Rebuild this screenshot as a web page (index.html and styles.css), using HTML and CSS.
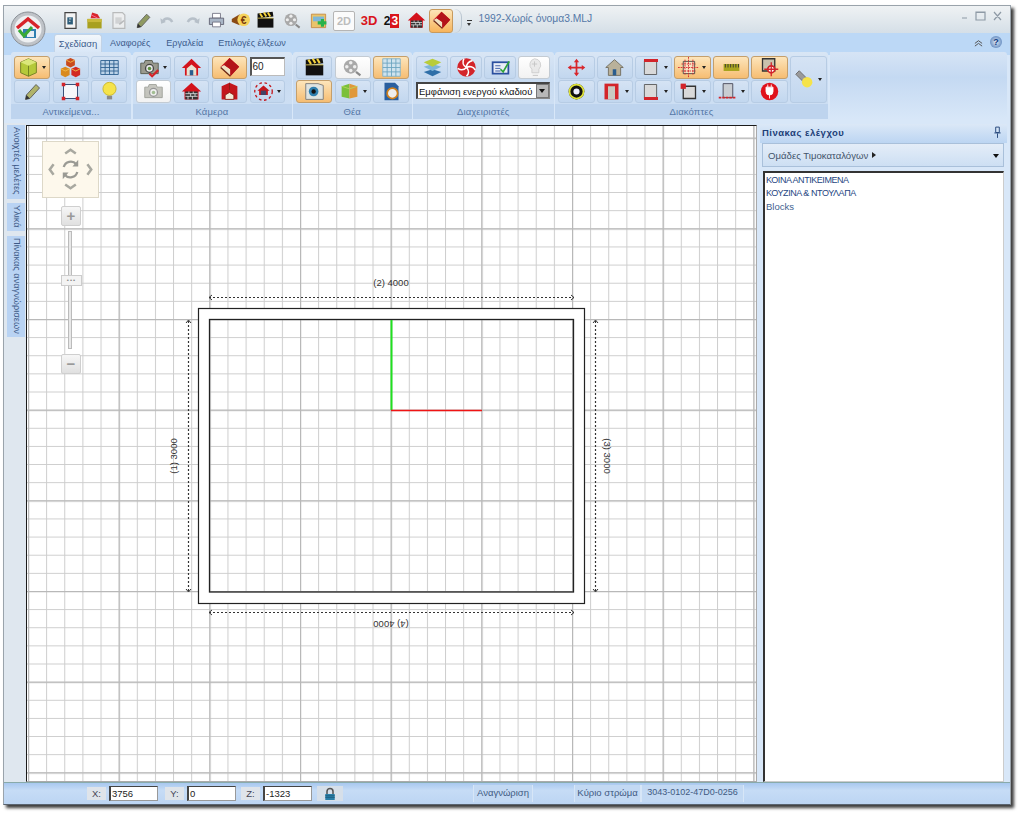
FILE: index.html
```html
<!DOCTYPE html>
<html lang="el">
<head>
<meta charset="utf-8">
<title>1992-Χωρίς όνομα3.MLJ</title>
<link rel="stylesheet" href="styles.css">
</head>
<body>
<svg class="defs" width="0" height="0">
  <defs>
    <symbol id="clap" viewBox="0 0 24 24"><path d="M2 9h20v12H2z" fill="#111"/><path d="M2 3l19-2 1 6-20 2z" fill="#111"/><path d="M5 3l3 5M10 2l3 5M15 2l3 5" stroke="#f3d23c" stroke-width="2.4"/><path d="M2 9h20" stroke="#d8c040"/></symbol>
    <symbol id="reel" viewBox="0 0 24 24"><circle cx="10" cy="11" r="8" fill="#a9a9a9"/><circle cx="10" cy="6.5" r="2" fill="#eee"/><circle cx="5.5" cy="11" r="2" fill="#eee"/><circle cx="14.5" cy="11" r="2" fill="#eee"/><circle cx="10" cy="15.5" r="2" fill="#eee"/><path d="M16 17l5 4" stroke="#8a8a8a" stroke-width="2.5"/></symbol>
    <symbol id="brick" viewBox="0 0 24 24"><path d="M12 2L1 12h3v9h16v-9h3z" fill="#d3121c"/><path d="M5 12h14v9H5z" fill="#333"/><path d="M5 14.500h14M5 17.500h14M9 12v2.500M14 12v2.500M11 14.500v3M16 14.500v3M8 17.500v3.500M13 17.500v3.500" stroke="#eee" stroke-width=".9"/></symbol>
    <symbol id="iso" viewBox="0 0 24 24"><path d="M12 1l11 10-10 11L1 12z" fill="#c8181e"/><path d="M1 12l12 10v-8L6 9z" fill="#efe2c4"/><path d="M13 14l-7-5 6-8 11 10-10 11z" fill="#b31319"/><path d="M2 12l11 10" stroke="#6b2a14" stroke-width="1.500"/></symbol>
    <symbol id="house" viewBox="0 0 24 24"><path d="M12 2L1 12.500h3.500V21h15v-8.500H23z" fill="#d3141c"/><path d="M6.500 13l5.500-4.500 5.500 4.500v8h-11z" fill="#e8e2d0"/><path d="M10 15h4v6h-4z" fill="#2a5d8f"/></symbol>
    <symbol id="cam" viewBox="0 0 24 24"><path d="M2 7h4l1-3h8l1 3h6v12H2z" fill="#9a9a8e" stroke="#55584c"/><circle cx="12" cy="13" r="4.500" fill="#e8e8e8" stroke="#444" stroke-width="1.500"/><circle cx="12" cy="13" r="2" fill="#5d8f3f"/></symbol>
    <symbol id="sq" viewBox="0 0 24 24"><path d="M5 4h14v16H5z" fill="#d9d9d9" stroke="#555"/></symbol>
  </defs>
</svg>
<div class="window">
  <header class="titlebar">
    <div class="logo">
      <svg viewBox="0 0 36 36" class="logo-svg"><circle cx="18" cy="18" r="17" fill="#bfc3c8" stroke="#8b9096"/><circle cx="18" cy="18" r="13.500" fill="#eef0f2"/><path d="M13 18h13v9H13z" fill="#2f7fb0"/><path d="M17 20h7v6h-7z" fill="#e6eef4"/><path d="M7 17L18 8l11 9" fill="none" stroke="#d8232a" stroke-width="3.500"/><path d="M9 19l5 6 8-9" fill="none" stroke="#39a935" stroke-width="3"/></svg>
    </div>
    <div class="qat">
      <span class="q"><svg class="i" viewBox="0 0 24 24"><path d="M5 2h14v20H5z" fill="#f4f4f4" stroke="#444" stroke-width="1.500"/><path d="M8 8h7v9H8z" fill="#2c5d7a"/><path d="M10 10h3M10 13h2" stroke="#fff"/></svg></span>
      <span class="q"><svg class="i" viewBox="0 0 24 24"><path d="M3 10h18v12H3z" fill="#a8a020"/><path d="M3 10h18v4H3z" fill="#c9b93a"/><path d="M7 9l2-7 7 2 3 5z" fill="#d8262c"/><path d="M8 5l8 4" stroke="#f7a" /></svg></span>
      <span class="q dim"><svg class="i" viewBox="0 0 24 24"><path d="M5 2h12l3 3v17H5z" fill="#f0f0f0" stroke="#aaa" stroke-width="1.500"/><path d="M8 8h8v8H8z" fill="#ccc"/><path d="M13 17l6-5" stroke="#aaa" stroke-width="2"/></svg></span>
      <span class="q"><svg class="i" viewBox="0 0 24 24"><path d="M5 16L16 4l4 4L9 20l-5 1z" fill="#8f9a62" stroke="#555"/><path d="M4 21l1-5 4 4z" fill="#333"/></svg></span>
      <span class="q dim"><svg class="i" viewBox="0 0 24 24"><path d="M6 14c2-6 9-6 12 0" fill="none" stroke="#a9b3bd" stroke-width="3"/><path d="M3 9l1 7 6-2z" fill="#a9b3bd"/></svg></span>
      <span class="q dim"><svg class="i" viewBox="0 0 24 24"><path d="M18 14c-2-6-9-6-12 0" fill="none" stroke="#a9b3bd" stroke-width="3"/><path d="M21 9l-1 7-6-2z" fill="#a9b3bd"/></svg></span>
      <span class="q"><svg class="i" viewBox="0 0 24 24"><path d="M7 3h10v6H7z" fill="#fff" stroke="#667"/><path d="M3 9h18v8H3z" fill="#a9b6c6" stroke="#556"/><path d="M7 14h10v6H7z" fill="#fff" stroke="#667"/></svg></span>
      <span class="q"><svg class="i" viewBox="0 0 24 24"><path d="M1 10l10-6v14L1 14z" fill="#8a4a14"/><circle cx="16" cy="11" r="8" fill="#f5d25a"/><text x="16" y="16" class="eu">€</text></svg></span>
      <span class="q"><svg class="i"><use href="#clap"/></svg></span>
      <span class="q wide"><svg class="i"><use href="#reel"/></svg></span>
      <span class="q"><svg class="i" viewBox="0 0 24 24"><path d="M3 4h18v17H3z" fill="#e9c46a" stroke="#c0813a"/><path d="M5 7h14v6H5z" fill="#7db7d8"/><path d="M11 13h4v-3h4v3h3v4h-3v3h-4v-3h-4z" fill="#27b34a"/></svg></span>
      <span class="q2d">2D</span>
      <span class="q t3d">3D</span>
      <span class="q t23"><b class="t2">2</b><b class="t3">3</b></span>
      <span class="q"><svg class="i"><use href="#brick"/></svg></span>
      <span class="q qon"><svg class="i"><use href="#iso"/></svg></span>
    </div>
    <span class="qat-end"></span>
    <span class="qat-drop"></span>
    <span class="doc-title">1992-Χωρίς όνομα3.MLJ</span>
    <div class="winctl">
      <svg viewBox="0 0 44 12" class="winctl-svg"><path d="M2 8h5M16 2h9v8h-9zM16 2.500h9M34 2l7 8M41 2l-7 8" fill="none" stroke="#8e9aa6" stroke-width="1.200"/></svg>
    </div>
  </header>

  <nav class="tabs">
    <span class="tab active">Σχεδίαση</span>
    <span class="tab t2nd">Αναφορές</span>
    <span class="tab t3rd">Εργαλεία</span>
    <span class="tab t4th">Επιλογές έλξεων</span>
    <span class="tabs-right">
      <svg class="chev" viewBox="0 0 10 10"><path d="M1 6l4-3 4 3M1 9l4-3 4 3" fill="none" stroke="#555" stroke-width="1.100"/></svg>
      <span class="help">?</span>
    </span>
  </nav>

  <section class="ribbon">
    <div class="group g1">
      <div class="grid cols3">
        <span class="b on drop"><svg class="i" viewBox="0 0 24 24"><path d="M12 2l9 4v12l-9 4-9-4V6z" fill="#b5c93a" stroke="#6b7a20"/><path d="M3 6l9 4 9-4-9-4z" fill="#dbe77a"/><path d="M12 10v12" stroke="#6b7a20"/></svg><i class="caret"></i></span>
        <span class="b"><svg class="i" viewBox="0 0 24 24"><path d="M12 1l5 2.500v6L12 12l-5-2.500v-6z" fill="#c94b1d"/><path d="M6 11l5 2.500v7L6 23l-5-2.500v-7z" fill="#d98a1e"/><path d="M18 11l5 2.500v7L18 23l-5-2.500v-7z" fill="#d22a22"/><path d="M7 3.500l5 2.500 5-2.500M1 13.500l5 2.500 5-2.500M13 13.500l5 2.500 5-2.500" fill="none" stroke="#f5c04a"/></svg></span>
        <span class="b"><svg class="i" viewBox="0 0 24 24"><path d="M2 4h20v16H2z" fill="#bcd3e8" stroke="#2c5f8f"/><path d="M2 8h20M2 12h20M2 16h20M7 4v16M12 4v16M17 4v16" stroke="#2c5f8f"/></svg></span>
        <span class="b"><svg class="i" viewBox="0 0 24 24"><path d="M5 16L16 4l4 4L9 20l-5 1z" fill="#b0b36a" stroke="#555"/><path d="M4 21l1-5 4 4z" fill="#333"/></svg></span>
        <span class="b"><svg class="i" viewBox="0 0 24 24"><path d="M4 4h16v16H4z" fill="#f7f7fa" stroke="#223a66"/><path d="M2 2h4v4H2zM18 2h4v4h-4zM2 18h4v4H2zM18 18h4v4h-4z" fill="#d3242a"/></svg></span>
        <span class="b"><svg class="i" viewBox="0 0 24 24"><circle cx="12" cy="9" r="7.500" fill="#f5e34a" stroke="#c9b428"/><path d="M9 17h6v4H9z" fill="#8a8a8a"/></svg></span>
      </div>
      <div class="glabel">Αντικείμενα...</div>
    </div>

    <div class="group g2">
      <div class="grid cols4">
        <span class="b drop"><svg class="i" viewBox="0 0 24 24"><use href="#cam"/><path d="M12 19l3 3 7-7" fill="none" stroke="#d3242a" stroke-width="2.500"/></svg><i class="caret"></i></span>
        <span class="b"><svg class="i"><use href="#house"/></svg></span>
        <span class="b on"><svg class="i"><use href="#iso"/></svg></span>
        <span class="num">60</span>
        <span class="b w"><svg class="i op"><use href="#cam"/></svg></span>
        <span class="b"><svg class="i"><use href="#brick"/></svg></span>
        <span class="b"><svg class="i" viewBox="0 0 24 24"><path d="M3 6l9-4 9 4v15H3z" fill="#c3161c"/><path d="M12 2v8M7 21v-5l5-3 5 3v5z" fill="#f3ecd8" stroke="#8a1a14"/></svg></span>
        <span class="b drop"><svg class="i" viewBox="0 0 24 24"><path d="M12 5l-7 6h2v5h10v-5h2z" fill="#c3161c"/><path d="M9 11h6v5H9z" fill="#446"/><circle cx="12" cy="12" r="10" fill="none" stroke="#c3161c" stroke-dasharray="3 3" stroke-width="1.500"/></svg><i class="caret"></i></span>
      </div>
      <div class="glabel">Κάμερα</div>
    </div>

    <div class="group g3">
      <div class="grid cols3">
        <span class="b"><svg class="i"><use href="#clap"/></svg></span>
        <span class="b w"><svg class="i"><use href="#reel"/></svg></span>
        <span class="b on"><svg class="i" viewBox="0 0 24 24"><path d="M2 2h20v20H2z" fill="#cfe3ee" stroke="#7fb0c8"/><path d="M2 7h20M2 12h20M2 17h20M7 2v20M12 2v20M17 2v20" stroke="#6aa3bf"/></svg></span>
        <span class="b on"><svg class="i" viewBox="0 0 24 24"><path d="M2 3h14l6 2v16H2z" fill="#dfe3e0" stroke="#777"/><circle cx="11" cy="12" r="5.500" fill="#2f7fae"/><circle cx="11" cy="12" r="2.500" fill="#111"/></svg></span>
        <span class="b drop"><svg class="i" viewBox="0 0 24 24"><path d="M3 6l9-3v17l-9-2z" fill="#7ac03a"/><path d="M12 3l9 3v12l-9 2z" fill="#e0983a"/><path d="M3 6l9 3 9-3" fill="none" stroke="#b5d45a"/></svg><i class="caret"></i></span>
        <span class="b"><svg class="i" viewBox="0 0 24 24"><path d="M4 2h12l4 4v16H4z" fill="#2a5f9f"/><circle cx="13" cy="14" r="6" fill="#eee" stroke="#d0801c" stroke-width="2"/></svg></span>
      </div>
      <div class="glabel">Θέα</div>
    </div>

    <div class="group g4">
      <div class="grid cols4n">
        <span class="b"><svg class="i" viewBox="0 0 24 24"><path d="M12 14l10 3-10 5-10-5z" fill="#2f6fa8"/><path d="M12 8l10 3-10 5-10-5z" fill="#7fb5d8"/><path d="M12 2l10 4-10 5-10-5z" fill="#b9cc3a"/></svg></span>
        <span class="b"><svg class="i" viewBox="0 0 24 24"><circle cx="12" cy="12" r="10.500" fill="#d3242a"/><g fill="none" stroke="#fff" stroke-width="1.800"><path d="M12 12C12 8 15 5 19 4"/><path d="M12 12C15 10 20 11 22 15"/><path d="M12 12C15 15 15 19 12 22"/><path d="M12 12C9 15 5 15 2 13"/><path d="M12 12C8 10 7 6 9 2"/></g></svg></span>
        <span class="b"><svg class="i" viewBox="0 0 24 24"><path d="M2 5h20v15H2z" fill="#2a4f9f"/><path d="M4 7h16v11H4z" fill="#e9edf7"/><path d="M6 10h6M6 13h6M6 16h6" stroke="#2a4f9f"/><path d="M12 14l3 3 7-12" fill="none" stroke="#2fa33a" stroke-width="2"/></svg></span>
        <span class="b w"><svg class="i op" viewBox="0 0 24 24"><path d="M12 2a7 7 0 0 1 5 12v4H9v-4A7 7 0 0 1 12 2z" fill="#ddd" stroke="#aaa"/><path d="M10 21h6M12 5v6M9 8h6" stroke="#999"/></svg></span>
      </div>
      <div class="sel"><span class="sel-text">Εμφάνιση ενεργού κλαδιού</span><i class="sel-btn"></i></div>
      <div class="glabel">Διαχειριστές</div>
    </div>

    <div class="group g5">
      <div class="grid cols7">
        <span class="b"><svg class="i" viewBox="0 0 24 24"><path d="M12 2l3 4h-2v5h5V9l4 3-4 3v-2h-5v5h2l-3 4-3-4h2v-5H6v2l-4-3 4-3v2h5V6H9z" fill="#d8262c"/></svg></span>
        <span class="b"><svg class="i" viewBox="0 0 24 24"><path d="M12 3L2 12h3v9h14v-9h3z" fill="#b9b19a" stroke="#6f6a5c"/><path d="M10 14h4v7h-4z" fill="#2a5d8f"/></svg></span>
        <span class="b drop"><svg class="i"><use href="#sq"/></svg><i class="tbar"></i><i class="caret"></i></span>
        <span class="b on drop"><svg class="i" viewBox="0 0 24 24"><path d="M6 5h13v14H6z" fill="#f7e5c4" stroke="#444"/><path d="M12 0v24M0 12h24M4 8h16M4 16h16M8 3v18M17 3v18" stroke="#d3242a" stroke-dasharray="2 1"/></svg><i class="caret"></i></span>
        <span class="b on"><svg class="i" viewBox="0 0 24 24"><path d="M3 8h18v8H3z" fill="#a8a41e"/><path d="M5 8v4M8 8v4M11 8v4M14 8v4M17 8v4M20 8v4" stroke="#333"/></svg></span>
        <span class="b on"><svg class="i" viewBox="0 0 24 24"><path d="M4 2h14v14H4z" fill="#c9c2ad" stroke="#333" stroke-width="1.500"/><circle cx="14" cy="14" r="4" fill="#fff" stroke="#d3242a" stroke-width="2"/><path d="M14 6v16M6 14h16" stroke="#d3242a" stroke-width="1.500"/></svg></span>
        <span class="b tall drop"><svg class="i" viewBox="0 0 24 24"><path d="M2 6l4-4 9 9-4 4z" fill="#9a9a9a" stroke="#666"/><circle cx="15" cy="15" r="6" fill="#f5e34a"/></svg><i class="caret"></i></span>
        <span class="b"><svg class="i" viewBox="0 0 24 24"><circle cx="12" cy="12" r="9" fill="#111"/><circle cx="12" cy="12" r="8" fill="none" stroke="#dfe23a" stroke-width="2"/><circle cx="12" cy="12" r="3.500" fill="#eef"/></svg></span>
        <span class="b drop"><svg class="i" viewBox="0 0 24 24"><path d="M4 3h16v18H4z" fill="#d3242a"/><path d="M8 6h8v15H8z" fill="#c9c9c2"/></svg><i class="caret"></i></span>
        <span class="b drop"><svg class="i"><use href="#sq"/></svg><i class="bbar"></i><i class="caret"></i></span>
        <span class="b drop"><svg class="i" viewBox="0 0 24 24"><path d="M6 6h14v14H6z" fill="#d9d9d9" stroke="#333" stroke-width="1.500"/><path d="M3 3h6v6H3z" fill="#d3242a"/></svg><i class="caret"></i></span>
        <span class="b drop"><svg class="i" viewBox="0 0 24 24"><path d="M7 3h11v16H7z" fill="#c9cdd2" stroke="#445"/><path d="M2 19h20" stroke="#d3242a" stroke-width="2" stroke-dasharray="3 1"/></svg><i class="caret"></i></span>
        <span class="b"><svg class="i" viewBox="0 0 24 24"><circle cx="12" cy="12" r="10" fill="#e0121c"/><path d="M8 7h8v5a4 4 0 0 1-8 0zM12 16v4M10 4v3M14 4v3" fill="#fff" stroke="#fff"/></svg></span>
      </div>
      <div class="glabel">Διακόπτες</div>
    </div>
    <div class="ribbon-rest"></div>
  </section>

  <main class="main">
    <aside class="sidetabs">
      <span class="stab s1">Ανοιχτές μελέτες</span>
      <span class="stab s2">Υλικά</span>
      <span class="stab s3">Πίνακας αναγνώρισεων</span>
    </aside>

    <div class="canvas">
      <svg class="plan" viewBox="27 126 729 655" width="729" height="655">
        <defs>
          <pattern id="minor" x="28" y="47" width="18.133" height="18.133" patternUnits="userSpaceOnUse">
            <path d="M.5 0v18.133M0 .5h18.133" stroke="#cdcdcd" fill="none"/>
          </pattern>
          <pattern id="major" x="28" y="47" width="90.667" height="90.667" patternUnits="userSpaceOnUse">
            <path d="M.5 0v90.667M0 .5h90.667" stroke="#b8b8b8" stroke-width="1.400" fill="none"/>
          </pattern>
        </defs>
        <rect x="27" y="126" width="729" height="655" fill="#fff"/>
        <rect x="27" y="126" width="729" height="655" fill="url(#minor)"/>
        <rect x="27" y="126" width="729" height="655" fill="url(#major)"/>
        <rect x="198.500" y="308.500" width="386" height="295" fill="#fff" stroke="#222" stroke-width="1.200"/>
        <rect x="209.500" y="319.500" width="364" height="272.500" fill="#fff"/>
        <rect x="209.500" y="319.500" width="364" height="272.500" fill="url(#minor)"/>
        <rect x="209.500" y="319.500" width="364" height="272.500" fill="url(#major)"/>
        <rect x="209.500" y="319.500" width="364" height="272.500" fill="none" stroke="#222" stroke-width="1.300"/>
        <path d="M391.500 320v90" stroke="#1fe01f" stroke-width="2"/>
        <path d="M391 410.500h91" stroke="#f01414" stroke-width="1.400"/>
        <g class="dim-line">
          <path d="M209 297.500h365M188.500 321v271M595.500 321v271M209 612.500h365"/>
          <path class="solid" d="M212 295l-3 2.500 3 2.500M571 295l3 2.500-3 2.500M186 323l2.500-3 2.500 3M186 589l2.500 3 2.500-3M593 323l2.500-3 2.500 3M593 589l2.500 3 2.500-3M212 610l-3 2.500 3 2.500M571 610l3 2.500-3 2.500"/>
        </g>
        <text x="391" y="286" class="dim-text">(2) 4000</text>
        <text class="dim-text" transform="translate(177 456) rotate(-90)">(1) 3000</text>
        <text class="dim-text" transform="translate(604 456) rotate(90)">(3) 3000</text>
        <text class="dim-text" transform="translate(391 621) rotate(180)">(4) 4000</text>
      </svg>

      <div class="pan">
        <svg viewBox="0 0 57 57" class="pan-svg">
          <path d="M23 12l5.500-4 5.500 4M23 44l5.500 4 5.500-4M11 23l-4 5.500 4 5.500M46 23l4 5.500-4 5.500" fill="none" stroke="#a8a8a0" stroke-width="2.600"/>
          <path d="M21.500 26a7.500 7.500 0 0 1 13-3M35.500 31a7.500 7.500 0 0 1-13 3" fill="none" stroke="#9a9a94" stroke-width="2.400"/>
          <path d="M36.500 18.500v7h-6zM20.500 38.500v-7h6z" fill="#9a9a94"/>
        </svg>
      </div>
      <span class="zbtn zplus">+</span>
      <span class="ztrack"></span>
      <span class="zthumb">•••</span>
      <span class="zbtn zminus">−</span>
    </div>

    <aside class="panel">
      <div class="panel-head">
        <span class="panel-title">Πίνακας ελέγχου</span>
        <svg class="pin" viewBox="0 0 10 14"><path d="M3 1h4v6H3zM1.500 7.500h7M5 8v5" fill="none" stroke="#2c4d80" stroke-width="1.100"/></svg>
      </div>
      <div class="panel-drop">
        <span>Ομάδες Τιμοκαταλόγων</span><i class="tri-r"></i><i class="tri-d"></i>
      </div>
      <ul class="tree">
        <li class="cap">ΚΟΙΝΑ ΑΝΤΙΚΕΙΜΕΝΑ</li>
        <li class="cap">ΚΟΥΖΙΝΑ &amp; ΝΤΟΥΛΑΠΑ</li>
        <li class="blocks">Blocks</li>
      </ul>
    </aside>
  </main>

  <footer class="status">
    <span class="lab">X:</span><span class="coord">3756</span>
    <span class="lab l2">Y:</span><span class="coord c2">0</span>
    <span class="lab l3">Z:</span><span class="coord c3">-1323</span>
    <span class="lock"><svg class="lock-svg" viewBox="0 0 14 16"><path d="M3.500 8V5a3.500 3.500 0 0 1 7 0v3" fill="none" stroke="#555" stroke-width="1.800"/><path d="M1.500 8h11v7h-11z" fill="#2a7fa8"/><path d="M1.500 10h11M1.500 12h11" stroke="#1d5f80"/></svg></span>
    <span class="scell sc1">Αναγνώριση</span>
    <span class="scell sc2">Κύριο στρώμα</span>
    <span class="scell sc3">3043-0102-47D0-0256</span>
  </footer>
</div>
</body>
</html>
```
FILE: styles.css
```css
* { box-sizing: border-box; }
html, body { margin: 0; padding: 0; background: #fff; }
body { width: 1024px; height: 817px; overflow: hidden; padding: 5px 0 0 3px; font-family: "Liberation Sans", "Noto Sans", sans-serif; font-size: 10px; color: #3d5a86; }
.defs { position: absolute; }
i { display: block; font-style: normal; }

.window { position: relative; width: 1008px; height: 800px; display: flex; flex-direction: column; background: #cfe0f4; border: 1px solid #9aa3ab; border-bottom-color: #5a6470; box-shadow: 3px 3px 3px #3c3c3c; }

.titlebar { height: 27px; flex: none; display: flex; align-items: center; padding: 2px 0 0 54px; background: linear-gradient(#eff2f4, #d5dfe7); position: relative; }
.logo { position: absolute; left: 6px; top: 5px; width: 36px; height: 36px; z-index: 2; }
.logo-svg { display: block; width: 36px; height: 36px; }
.qat { display: flex; align-items: center; height: 24px; }
.q { width: 24.4px; height: 24px; display: flex; align-items: center; justify-content: center; flex: none; }
.q.wide { width: 29px; }
.i { width: 21px; height: 21px; display: block; flex: none; }
.q .i { width: 19px; height: 19px; }
.dim { opacity: .75; }
.op { opacity: .55; }
.eu { font: bold 13px "Liberation Sans", sans-serif; fill: #7a3a10; text-anchor: middle; }
.q2d { width: 22px; height: 20px; margin: 0 2px; border: 1px solid #b5b5b5; background: #fbfbfb; color: #bdbdbd; font-size: 11px; font-weight: bold; display: flex; align-items: center; justify-content: center; border-radius: 2px; }
.t3d { color: #d9141c; font-size: 13px; font-weight: bold; }
.t23 { font-size: 12px; color: #111; margin-right: 1px; margin-left: -2px; }
.t2 { color: #111; }
.t3 { color: #fff; background: #d9141c; padding: 0 1px; line-height: 14px; }
.qon { border: 1px solid #c89a5c; border-radius: 3px; background: linear-gradient(#fde6b8, #f7b45c); }
.qat-end { width: 8px; height: 24px; border-right: 1px solid #b9c5d0; border-radius: 0 12px 12px 0; flex: none; margin-left: 1px; }
.qat-drop { width: 5px; height: 6px; margin: 5px 3px 0 5px; border-top: 1px solid #333; position: relative; flex: none; }
.qat-drop::after { content: ""; position: absolute; left: 0; top: 2px; border: 2.5px solid transparent; border-top: 3px solid #333; border-bottom: 0; }
.doc-title { font-size: 10.3px; color: #5579a8; margin-left: 3px; margin-top: -5px; }
.winctl { margin-left: auto; margin-right: 6px; margin-top: -9px; }
.winctl-svg { display: block; width: 44px; height: 12px; }

.tabs { height: 19px; flex: none; display: flex; align-items: flex-end; background: #bcd8f6; padding-left: 50px; position: relative; }
.tab { height: 18px; line-height: 19px; color: #3c5c8c; font-size: 9.1px; white-space: nowrap; }
.tab.active { width: 48px; text-align: center; font-size: 9.4px; background: linear-gradient(#f3f7fb, #d9e7f7); border: 1px solid #c2d3e6; border-bottom: 0; border-radius: 3px 3px 0 0; line-height: 17px; }
.t2nd { margin-left: 8px; }
.t3rd { margin-left: 16px; }
.t4th { margin-left: 15px; }
.tabs-right { position: absolute; right: 8px; top: 3px; display: flex; align-items: center; gap: 7px; }
.chev { width: 9px; height: 9px; display: block; }
.help { width: 12px; height: 12px; border-radius: 50%; background: radial-gradient(#dfe9f6, #3f6fb0); color: #0f3a80; font: bold 9px/12px "Liberation Sans", sans-serif; text-align: center; }

.ribbon { height: 71px; flex: none; display: flex; align-items: flex-start; gap: 1.5px; padding: 0 3px 0 7px; background: linear-gradient(#bcd8f6 3px, #d8e7f8 3px); }
.group { flex: none; display: flex; flex-direction: column; padding: 4px 3px 0; background: linear-gradient(#d9e6f5, #c8dbf1 40%, #cfe0f4); height: 67px; border-radius: 3px 3px 0 0; position: relative; }
.g1 { width: 120px; }
.g2 { width: 159px; }
.g3 { width: 118.5px; }
.g4 { width: 140.5px; }
.g5 { width: 273px; }
.ribbon-rest { flex: 1; height: 67px; background: linear-gradient(#d6e4f5, #c4d9f2 38%, #d8e7f8); border-radius: 0 3px 3px 0; }
.grid { display: grid; grid-auto-rows: 23px; gap: 1px 2.5px; height: 47px; }
.cols3 { grid-template-columns: repeat(3, 36px); }
.cols4 { grid-template-columns: repeat(4, 35.5px); }
.cols4n { grid-template-columns: repeat(4, 32px); gap: 0 2px; height: 23px; }
.cols7 { grid-template-columns: repeat(7, 36.5px); gap: 1px 2.2px; }
.glabel { margin-top: auto; height: 15px; margin-left: -3px; margin-right: -3px; background: #bed4ee; text-align: center; font-size: 9.5px; line-height: 15px; color: #5577a6; letter-spacing: .1px; }

.b { display: flex; align-items: center; justify-content: center; gap: 3px; position: relative; height: 23px; border: 1px solid #b7cce4; border-radius: 3px; background: linear-gradient(#d5e3f4, #c2d7ef); }
.b.on { border-color: #c49f6c; background: linear-gradient(#fde5bb, #f6bd72); }
.b.w { background: linear-gradient(#fff, #f2f2f2); border-color: #c3cbd3; }
.b.tall { grid-column: 7; grid-row: 1 / 3; height: 47px; }
.caret { width: 0; height: 0; border: 2.5px solid transparent; border-top: 3px solid #222; border-bottom: 0; flex: none; }
.tbar, .bbar { position: absolute; left: 8px; width: 14px; height: 3px; background: #d3242a; }
.tbar { top: 2px; }
.bbar { bottom: 2px; }
.num { height: 19px; align-self: center; margin-top: -2px; background: #fff; border: 1px solid #bbb; border-top: 2px solid #555; border-left: 2px solid #555; font-size: 10px; line-height: 16px; padding-left: 1px; color: #222; }

.sel { height: 17px; margin-top: 3px; width: 134px; display: flex; align-items: center; background: #fff; border: 1px solid #888; border-top: 2px solid #444; border-left: 2px solid #444; color: #111; font-size: 9.5px; padding-left: 1px; white-space: nowrap; position: relative; }
.sel-text { flex: 1; overflow: hidden; }
.sel-btn { width: 13px; height: 14px; background: #b8b8b8; border: 1px solid #777; position: relative; flex: none; }
.sel-btn::after { content: ""; position: absolute; left: 2px; top: 4px; border: 3.5px solid transparent; border-top: 4px solid #111; border-bottom: 0; }

.main { flex: 1; min-height: 0; display: flex; background: #d8e7f8; }
.sidetabs { width: 22px; flex: none; padding: 2px 0 0 3px; display: flex; flex-direction: column; background: #dfe7ef; }
.stab { writing-mode: vertical-rl; width: 18px; background: #b9d3f3; color: #3d5a86; font-size: 9.2px; line-height: 17px; padding-top: 2px; white-space: nowrap; }
.s1 { height: 74px; }
.s2 { height: 28px; margin-top: 4px; }
.s3 { height: 101px; margin-top: 5px; }

.canvas { position: relative; width: 731px; height: 657px; flex: none; background: #fff; border: 1px solid #1b1b1b; border-right: 1px solid #aaa; border-bottom: 1px solid #aaa; margin-top: 2px; }
.plan { display: block; }
.dim-line { fill: none; stroke: #333; stroke-width: 1.2; stroke-dasharray: 2 2; }
.dim-line .solid { stroke-dasharray: none; stroke-width: 1; }
.dim-text { font: 9.5px "Liberation Sans", sans-serif; fill: #333; text-anchor: middle; }

.pan { position: absolute; left: 15px; top: 15px; width: 57px; height: 57px; background: #fdf8ec; border: 1px solid #ddd8c8; }
.pan-svg { display: block; width: 55px; height: 55px; }
.zbtn { position: absolute; left: 34px; width: 20px; height: 20px; background: linear-gradient(#f6f6f6, #e0e0e0); border: 1px solid #cfcfcf; border-radius: 2px; color: #999; font: bold 15px/17px "Liberation Sans", sans-serif; text-align: center; }
.zplus { top: 80px; }
.zminus { top: 228px; }
.ztrack { position: absolute; left: 41px; top: 105px; width: 4px; height: 118px; background: #e8e8e8; border: 1px solid #bbb; }
.zthumb { position: absolute; left: 34px; top: 149px; width: 21px; height: 11px; background: #f3f3f3; border: 1px solid #ccc; font-size: 6px; line-height: 9px; letter-spacing: 1px; color: #888; text-align: center; }

.panel { flex: 1; min-width: 0; display: flex; flex-direction: column; background: #d8e7f8; padding: 1px 6px 0 5px; }
.panel-head { height: 19px; flex: none; display: flex; align-items: center; justify-content: space-between; padding: 0 5px 3px 2px; background: linear-gradient(#dbe8f7, #bcd5f2); margin: 0 -3px 0 -2px; }
.panel-title { color: #1d3f78; font-weight: bold; font-size: 9.5px; letter-spacing: .5px; }
.pin { width: 9px; height: 13px; display: block; }
.panel-drop { height: 24px; flex: none; display: flex; align-items: center; padding-left: 5px; background: linear-gradient(#e4edf8, #cddff3); border: 1px solid #a9c0da; color: #44546a; font-size: 9.6px; position: relative; }
.tri-r { margin-left: 4px; border: 3px solid transparent; border-left: 4px solid #222; border-right: 0; }
.tri-d { position: absolute; right: 4px; top: 10px; border: 3.500px solid transparent; border-top: 4px solid #111; border-bottom: 0; }
.tree { flex: 1; margin: 4px 0 0 1px; padding: 1px 0 0 1px; list-style: none; background: #fff; border: 1px solid #ccc; border-top: 2px solid #333; border-left: 2px solid #333; font-size: 9.5px; line-height: 13px; color: #25457f; }
.cap { font-size: 9px; letter-spacing: -.45px; }
.blocks { color: #3f5f90; }

.status { height: 22px; flex: none; position: relative; display: flex; align-items: center; padding-left: 83px; background: linear-gradient(#a8c8ef, #c6dcf6 35%, #bcd5f3); border-top: 1px solid #8aa; color: #3f5a82; font-size: 9.5px; }
.lab { width: 19px; height: 13px; background: #dfe4ea; text-align: center; line-height: 13px; margin-right: 3px; color: #445; }
.coord { width: 49px; height: 15px; background: #fff; border: 1px solid #999; border-top-color: #444; border-left: 2px solid #444; line-height: 13px; padding-left: 1px; color: #222; }
.l2 { margin-left: 7px; }
.l3 { margin-left: 5px; }
.lock { width: 26px; height: 15px; margin-left: 5px; background: #d6dfe9; display: flex; align-items: center; justify-content: center; }
.lock-svg { width: 12px; height: 14px; display: block; }
.scell { height: 17px; line-height: 15px; text-align: center; background: #c3d9f3; border-left: 1px solid #d7e6f7; border-right: 1px solid #d7e6f7; white-space: nowrap; }
.sc1 { margin-left: 130px; width: 60px; }
.sc2 { margin-left: 41px; width: 67px; }
.sc3 { width: 103px; font-size: 9px; }
```
